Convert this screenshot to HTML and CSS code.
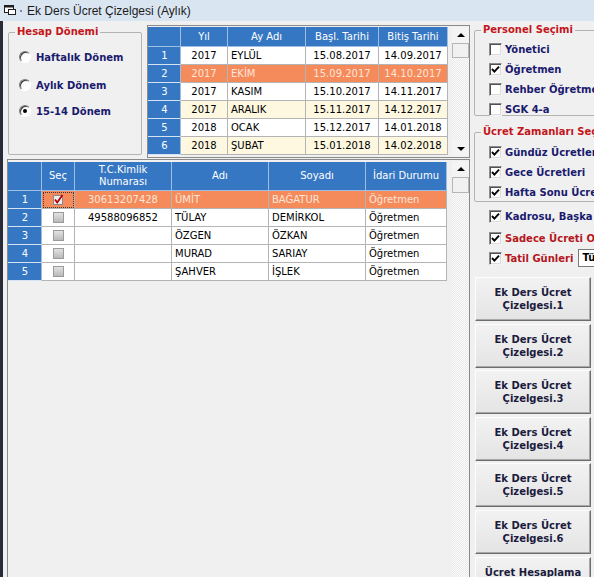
FILE: index.html
```html
<!DOCTYPE html>
<html lang="tr">
<head>
<meta charset="utf-8">
<title>Ek Ders Ücret Çizelgesi (Aylık)</title>
<link rel="stylesheet" href="styles.css">
</head>
<body>
<div class="window">
  <div class="titlebar">
    <svg class="app-icon" width="13" height="11" viewBox="0 0 13 11">
      <rect x="0.5" y="0.5" width="9" height="7" fill="#fff" stroke="#1e1e1e"/>
      <rect x="0.5" y="0.5" width="9" height="2" fill="#1e1e1e"/>
      <rect x="4.5" y="4.5" width="7" height="5" fill="#fff" stroke="#1e1e1e"/>
    </svg>
    <span class="title-dot"></span>
    <span class="title">Ek Ders Ücret Çizelgesi (Aylık)</span>
  </div>
  <div class="client">
    <div class="left">
      <div class="toprow">
        <fieldset class="group period">
          <legend>Hesap Dönemi</legend>
          <div class="radio r1"><span class="rb"></span>Haftalık Dönem</div>
          <div class="radio r2"><span class="rb"></span>Aylık Dönem</div>
          <div class="radio r3"><span class="rb on"></span>15-14 Dönem</div>
        </fieldset>
        <div class="gridbox months">
          <table class="grid">
            <thead>
              <tr>
                <th class="rh m-rh"></th>
                <th class="m-yil">Yıl</th>
                <th class="m-ay">Ay Adı</th>
                <th class="m-bas">Başl. Tarihi</th>
                <th class="m-bit">Bitiş Tarihi</th>
              </tr>
            </thead>
            <tbody>
              <tr><td class="rh">1</td><td class="c">2017</td><td>EYLÜL</td><td class="c">15.08.2017</td><td class="c">14.09.2017</td></tr>
              <tr class="sel"><td class="rh">2</td><td class="c">2017</td><td>EKİM</td><td class="c">15.09.2017</td><td class="c">14.10.2017</td></tr>
              <tr><td class="rh">3</td><td class="c">2017</td><td>KASIM</td><td class="c">15.10.2017</td><td class="c">14.11.2017</td></tr>
              <tr class="alt"><td class="rh">4</td><td class="c">2017</td><td>ARALIK</td><td class="c">15.11.2017</td><td class="c">14.12.2017</td></tr>
              <tr><td class="rh">5</td><td class="c">2018</td><td>OCAK</td><td class="c">15.12.2017</td><td class="c">14.01.2018</td></tr>
              <tr class="alt"><td class="rh">6</td><td class="c">2018</td><td>ŞUBAT</td><td class="c">15.01.2018</td><td class="c">14.02.2018</td></tr>
            </tbody>
          </table>
          <div class="vscroll">
            <div class="sbtn up"></div>
            <div class="thumb"></div>
            <div class="track"></div>
            <div class="sbtn down"></div>
          </div>
        </div>
      </div>
      <div class="gridbox staff">
        <table class="grid">
          <thead>
            <tr>
              <th class="rh s-rh"></th>
              <th class="s-sec">Seç</th>
              <th class="s-tc">T.C.Kimlik<br>Numarası</th>
              <th class="s-ad">Adı</th>
              <th class="s-soy">Soyadı</th>
              <th class="s-idr">İdari Durumu</th>
            </tr>
          </thead>
          <tbody>
            <tr class="sel">
              <td class="rh">1</td>
              <td class="c focus"><svg class="gcheck" width="12" height="12" viewBox="0 0 12 12"><rect x="1.5" y="1.5" width="9" height="9" fill="#ececec" stroke="#8a8a8a"/><path d="M3 5.5 L5.2 8.5 L10.5 1" fill="none" stroke="#b40000" stroke-width="1.8"/></svg></td>
              <td class="c">30613207428</td><td>ÜMİT</td><td>BAĞATUR</td><td>Öğretmen</td>
            </tr>
            <tr>
              <td class="rh">2</td><td class="c"><span class="gcb"></span></td>
              <td class="c">49588096852</td><td>TÜLAY</td><td>DEMİRKOL</td><td>Öğretmen</td>
            </tr>
            <tr>
              <td class="rh">3</td><td class="c"><span class="gcb"></span></td>
              <td class="c"></td><td>ÖZGEN</td><td>ÖZKAN</td><td>Öğretmen</td>
            </tr>
            <tr>
              <td class="rh">4</td><td class="c"><span class="gcb"></span></td>
              <td class="c"></td><td>MURAD</td><td>SARIAY</td><td>Öğretmen</td>
            </tr>
            <tr>
              <td class="rh">5</td><td class="c"><span class="gcb"></span></td>
              <td class="c"></td><td>ŞAHVER</td><td>İŞLEK</td><td>Öğretmen</td>
            </tr>
          </tbody>
        </table>
        <div class="vscroll">
          <div class="sbtn up"></div>
          <div class="thumb tall"></div>
          <div class="track"></div>
        </div>
      </div>
    </div>

    <div class="right">
      <fieldset class="group personel">
        <legend>Personel Seçimi</legend>
        <div class="chk first"><span class="cb"></span>Yönetici</div>
        <div class="chk"><span class="cb"><svg width="9" height="9" viewBox="0 0 9 9"><path d="M1 4 L3.4 6.6 L8 1.6" fill="none" stroke="#000" stroke-width="1.9"/></svg></span>Öğretmen</div>
        <div class="chk"><span class="cb"></span>Rehber Öğretmen</div>
        <div class="chk"><span class="cb"></span>SGK 4-a</div>
      </fieldset>
      <fieldset class="group zaman">
        <legend>Ücret Zamanları Seçimi</legend>
        <div class="chk first"><span class="cb"><svg width="9" height="9" viewBox="0 0 9 9"><path d="M1 4 L3.4 6.6 L8 1.6" fill="none" stroke="#000" stroke-width="1.9"/></svg></span>Gündüz Ücretleri</div>
        <div class="chk"><span class="cb"><svg width="9" height="9" viewBox="0 0 9 9"><path d="M1 4 L3.4 6.6 L8 1.6" fill="none" stroke="#000" stroke-width="1.9"/></svg></span>Gece Ücretleri</div>
        <div class="chk"><span class="cb"><svg width="9" height="9" viewBox="0 0 9 9"><path d="M1 4 L3.4 6.6 L8 1.6" fill="none" stroke="#000" stroke-width="1.9"/></svg></span>Hafta Sonu Ücretleri</div>
      </fieldset>
      <div class="chk solo kadro"><span class="cb"><svg width="9" height="9" viewBox="0 0 9 9"><path d="M1 4 L3.4 6.6 L8 1.6" fill="none" stroke="#000" stroke-width="1.9"/></svg></span>Kadrosu, Başka Okulda Olanlar</div>
      <div class="chk solo red sadece"><span class="cb"><svg width="9" height="9" viewBox="0 0 9 9"><path d="M1 4 L3.4 6.6 L8 1.6" fill="none" stroke="#000" stroke-width="1.9"/></svg></span>Sadece Ücreti Olanlar</div>
      <div class="chk solo red tatil"><span class="cb"><svg width="9" height="9" viewBox="0 0 9 9"><path d="M1 4 L3.4 6.6 L8 1.6" fill="none" stroke="#000" stroke-width="1.9"/></svg></span>Tatil Günleri<span class="textbox">Tümü</span></div>

      <div class="buttons">
        <button class="btn">Ek Ders Ücret<br>Çizelgesi.1</button>
        <button class="btn">Ek Ders Ücret<br>Çizelgesi.2</button>
        <button class="btn">Ek Ders Ücret<br>Çizelgesi.3</button>
        <button class="btn">Ek Ders Ücret<br>Çizelgesi.4</button>
        <button class="btn">Ek Ders Ücret<br>Çizelgesi.5</button>
        <button class="btn">Ek Ders Ücret<br>Çizelgesi.6</button>
        <button class="btn">Ücret Hesaplama<br>Tablosu</button>
      </div>
    </div>
  </div>
</div>
</body>
</html>
```

FILE: styles.css
```css
* { box-sizing: border-box; }
html, body { margin: 0; padding: 0; }
body {
  background: #f0f0f0;
  font-family: "DejaVu Sans", "Liberation Sans", sans-serif;
  font-size: 10px;
  color: #000;
  overflow: hidden;
}
.window {
  width: 594px;
  height: 577px;
  display: flex;
  flex-direction: column;
  overflow: hidden;
  background: #f0f0f0;
}

/* title bar */
.titlebar {
  height: 21px;
  flex: none;
  display: flex;
  align-items: center;
  background: #dae5f2;
  padding-left: 4px;
}
.app-icon { display: block; }
.title-dot { width: 2px; height: 2px; background: #7d8ba0; margin: 0 5px 0 3px; }
.title {
  font-family: "Liberation Sans", Arial, sans-serif;
  font-size: 12px;
  color: #1b1b1b;
}

.client {
  flex: 1;
  min-height: 0;
  display: flex;
  border-left: 3px solid #272c38;
}

/* left column */
.left {
  width: 467px;
  flex: none;
  display: flex;
  flex-direction: column;
  padding-left: 4px;
}
.toprow {
  display: flex;
  height: 134px;
  margin-top: 4px;
  flex: none;
}

/* group boxes */
.group {
  margin: 0;
  border: 1px solid #b4b4b4;
  border-radius: 2px;
  padding: 0 0 0 6px;
  min-width: 0;
}
.group legend {
  padding: 0 2px;
  font-weight: bold;
  font-size: 10px;
  line-height: 12px;
  color: #c4161c;
  white-space: nowrap;
}
.period {
  width: 134px;
  height: 129px;
  margin: 1px 0 0 1px;
}

.radio {
  display: flex;
  align-items: center;
  height: 14px;
  font-weight: bold;
  color: #1a1a6e;
  white-space: nowrap;
}
.radio.r1 { margin-top: 12px; }
.radio.r2 { margin-top: 14px; }
.radio.r3 { margin-top: 12px; }
.rb {
  width: 12px;
  height: 12px;
  margin: 0 5px 0 4px;
  border-radius: 50%;
  border: 1px solid;
  border-color: #7a7a7a #ffffff #ffffff #7a7a7a;
  background: #fff;
  box-shadow: inset 1px 1px 0 #3c3c3c;
  display: flex;
  align-items: center;
  justify-content: center;
  flex: none;
}
.rb.on::after {
  content: "";
  width: 4px;
  height: 4px;
  border-radius: 50%;
  background: #000;
}

/* grids */
.gridbox {
  border: 1px solid #8a8a8a;
  background: #f0f0f0;
  display: flex;
  align-items: flex-start;
}
.months {
  width: 323px;
  height: 133px;
  margin-left: auto;
}
.staff {
  width: 463px;
  height: 440px;
  flex: none;
}
.grid {
  border-collapse: separate;
  border-spacing: 0;
  table-layout: fixed;
  font-size: 10px;
}
.months .grid { width: 300px; margin-top: 1px; }
.staff .grid { width: 439px; margin-top: 2px; }

.grid th {
  background: #3677c3;
  color: #fff;
  font-weight: normal;
  border-right: 1px solid #9dbde2;
  border-bottom: 1px solid #9dbde2;
  padding: 0 2px;
  text-align: center;
  line-height: 12px;
}
.months thead tr { height: 20px; }
.staff thead tr { height: 29px; }
.grid tbody tr { height: 18px; }
.grid td {
  background: #fff;
  border-right: 1px solid #b4b4b4;
  border-bottom: 1px solid #b4b4b4;
  padding: 0 2px 0 3px;
  white-space: nowrap;
  overflow: hidden;
}
.grid td.c { text-align: center; padding: 0 2px; }
.grid tr.alt td { background: #fdf8df; }
.grid tr.sel td { background: #f58b5b; color: #fde5da; }
.grid tr td.rh {
  background: #3677c3;
  color: #fff;
  text-align: center;
  border-bottom-color: #d4e2f2;
  border-right-color: #9dbde2;
}
.grid td.focus { outline: 1px dotted #3a3a3a; outline-offset: -2px; }

.m-rh { width: 33px; }
.m-yil { width: 47px; }
.m-ay { width: 78px; }
.m-bas { width: 73px; }
.m-bit { width: 69px; }

.s-rh { width: 34px; }
.s-sec { width: 33px; }
.s-tc { width: 97px; }
.s-ad { width: 97px; }
.s-soy { width: 97px; }
.s-idr { width: 81px; }

.gcb {
  display: inline-block;
  vertical-align: middle;
  width: 11px;
  height: 11px;
  border: 1px solid #9a9a9a;
  background: linear-gradient(#e2e2e2, #b9b9b9);
}
.gcheck { display: inline-block; vertical-align: middle; }

/* scrollbars */
.vscroll {
  width: 17px;
  align-self: stretch;
  margin-left: auto;
  display: flex;
  flex-direction: column;
  background: repeating-conic-gradient(#fcfcfc 0 25%, #e9e9e9 0 50%) 0 0 / 2px 2px;
}
.months .vscroll { margin-top: 1px; margin-bottom: 1px; }
.staff .vscroll { margin-top: 1px; }
.sbtn {
  height: 15px;
  flex: none;
  background: #f4f4f4;
  display: flex;
  align-items: center;
  justify-content: center;
}
.sbtn::before {
  content: "";
  border-left: 4px solid transparent;
  border-right: 4px solid transparent;
}
.sbtn.up::before { border-bottom: 4px solid #000; }
.sbtn.down::before { border-top: 4px solid #000; }
.thumb {
  height: 15px;
  flex: none;
  margin-top: 1px;
  background: #f1f1f1;
  border: 1px solid #b6b6b6;
}
.thumb.tall { height: 16px; }
.track { flex: 1; }

/* right column */
.right {
  flex: 1;
  min-width: 0;
  overflow: hidden;
  padding-left: 4px;
}
.personel {
  width: 140px;
  height: 92px;
  margin-top: 3px;
}
.zaman {
  width: 140px;
  height: 76px;
  margin-top: 10px;
}
.chk {
  display: flex;
  align-items: center;
  height: 14px;
  margin-top: 6px;
  font-weight: bold;
  color: #1a1a6e;
  white-space: nowrap;
}
.personel .chk.first { margin-top: 6px; }
.zaman .chk.first { margin-top: 7px; }
.chk.red { color: #b5171d; }
.cb {
  width: 13px;
  height: 13px;
  flex: none;
  margin: 0 3px 0 8px;
  border: 1px solid;
  border-color: #8c8c8c #f4f4f4 #f4f4f4 #8c8c8c;
  box-shadow: inset 1px 1px 0 #505050, inset -1px -1px 0 #dcdcdc;
  background: #fff;
  display: flex;
  align-items: center;
  justify-content: center;
}
.cb svg { display: block; }
.chk.solo .cb { margin-left: 15px; }
.chk.kadro { margin-top: 7px; }
.chk.sadece { margin-top: 8px; }
.chk.tatil { margin-top: 4px; height: 18px; }
.textbox {
  margin-left: 5px;
  width: 60px;
  height: 18px;
  flex: none;
  border: 1px solid #7a7a7a;
  background: #fff;
  color: #000;
  padding-left: 3px;
  line-height: 16px;
}

.buttons {
  margin-top: 10px;
  display: flex;
  flex-direction: column;
  gap: 2.6px;
}
.btn {
  width: 116px;
  height: 44px;
  flex: none;
  margin: 0 0 0 1px;
  padding: 0;
  font-family: "DejaVu Sans", sans-serif;
  font-size: 10px;
  font-weight: bold;
  line-height: 13px;
  color: #1b1b3e;
  text-align: center;
  background: linear-gradient(#f2f2f2, #e4e4e4);
  border: 1px solid;
  border-color: #fdfdfd #6d6d6d #6d6d6d #fdfdfd;
  box-shadow: inset -1px -1px 0 #a8a8a8;
  border-radius: 0;
}
```
